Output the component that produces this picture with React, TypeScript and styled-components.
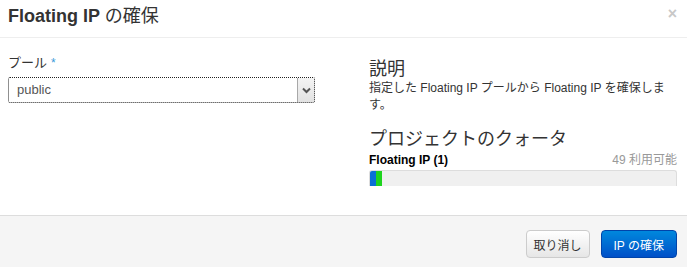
import styled, {createGlobalStyle} from "styled-components";

const GlobalStyle = createGlobalStyle`
  html, body {
    margin: 0;
    padding: 0;
    background: #ffffff;
  }
  body {
    font-family: "Liberation Sans", "Noto Sans CJK JP", sans-serif;
    color: #333333;
  }
`;

const Modal = styled.div`
  width: 687px;
  height: 267px;
  display: flex;
  flex-direction: column;
  background: #ffffff;
`;

const Header = styled.header`
  height: 37px;
  border-bottom: 1px solid #eeeeee;
  display: flex;
  align-items: center;
  justify-content: space-between;
  padding: 0 10px 0 8px;
`;

const Title = styled.h3`
  margin: 0;
  font-size: 18px;
  font-weight: bold;
  color: #333333;
  line-height: 20px;
  padding-bottom: 6px;

  span {
    font-weight: normal;
  }
`;

const Close = styled.span`
  font-size: 16px;
  font-weight: bold;
  color: #c8c8c8;
  line-height: 16px;
  margin-top: -10px;
`;

const Body = styled.div`
  flex: 1;
  display: grid;
  grid-template-columns: 361px 308px;
  padding: 0 10px 0 8px;
`;

const LeftCol = styled.div`
  padding-top: 16px;
`;

const Label = styled.label`
  display: block;
  font-size: 13px;
  color: #333333;
  line-height: 18px;
  margin-bottom: 5px;

  em {
    font-style: normal;
    color: #3a9ad9;
    margin-left: 4px;
    font-size: 12px;
  }
`;

const Select = styled.div`
  width: 307px;
  height: 26px;
  box-sizing: border-box;
  border: 1px dotted #222222;
  border-radius: 2px;
  display: flex;
  align-items: stretch;
  background: #ffffff;
`;

const SelectValue = styled.span`
  flex: 1;
  font-size: 13px;
  color: #555555;
  padding-left: 8px;
  line-height: 24px;
`;

const SelectArrow = styled.span`
  width: 16px;
  border-left: 1px solid #a8a8a8;
  background: linear-gradient(#f4f4f4, #e2e2e2);
  display: flex;
  align-items: center;
  justify-content: center;
`;

const RightCol = styled.div`
  padding-top: 17px;
`;

const Heading = styled.h4`
  margin: 0;
  font-size: 18px;
  font-weight: normal;
  color: #333333;
  line-height: 24px;
  font-family: "Noto Sans CJK JP", sans-serif;
`;

const Text = styled.p`
  margin: 0 0 11px;
  font-size: 12px;
  line-height: 17px;
  color: #333333;
  padding-top: 1px;
`;

const QuotaRow = styled.div`
  display: flex;
  justify-content: space-between;
  font-size: 12px;
  line-height: 16px;
  margin-top: 3px;
`;

const QuotaName = styled.strong`
  color: #000000;
`;

const QuotaLeft = styled.span`
  color: #999999;
`;

const Bar = styled.div`
  height: 15px;
  margin-top: 2px;
  background: #f0f0f0;
  border: 1px solid #dddddd;
  border-bottom: none;
  border-radius: 3px 3px 0 0;
  overflow: hidden;
  display: flex;
`;

const Fill = styled.div<{$color: string}>`
  background: ${p => p.$color};
`;

const Footer = styled.footer`
  height: 51px;
  border-top: 1px solid #dddddd;
  background: #f5f5f5;
  display: flex;
  justify-content: flex-end;
  align-items: center;
  gap: 11px;
  padding: 0 10px 0 0;
`;

const Button = styled.button<{$primary?: boolean}>`
  height: 28px;
  box-sizing: border-box;
  padding: 0 ${p => (p.$primary ? "12px" : "7px")};
  font-size: 12px;
  font-family: "Liberation Sans", "Noto Sans CJK JP", sans-serif;
  border-radius: 4px;
  border: 1px solid ${p => (p.$primary ? "#0044aa" : "#cccccc")};
  color: ${p => (p.$primary ? "#ffffff" : "#333333")};
  background: ${p =>
    p.$primary
      ? "linear-gradient(#0088dd, #0050c8)"
      : "linear-gradient(#ffffff, #e6e6e6)"};
  margin-top: 5px;
`;

export default function App() {
  return (
    <>
      <GlobalStyle />
      <Modal>
        <Header>
          <Title>
            Floating IP <span>の確保</span>
          </Title>
          <Close>×</Close>
        </Header>
        <Body>
          <LeftCol>
            <Label>
              プール<em>*</em>
            </Label>
            <Select>
              <SelectValue>public</SelectValue>
              <SelectArrow>
                <svg width="9" height="7" viewBox="0 0 9 7">
                  <path d="M1 1.5 L4.5 5 L8 1.5" fill="none" stroke="#555" strokeWidth="2" />
                </svg>
              </SelectArrow>
            </Select>
          </LeftCol>
          <RightCol>
            <Heading>説明</Heading>
            <Text>指定した Floating IP プールから Floating IP を確保します。</Text>
            <Heading>プロジェクトのクォータ</Heading>
            <QuotaRow>
              <QuotaName>Floating IP (1)</QuotaName>
              <QuotaLeft>49 利用可能</QuotaLeft>
            </QuotaRow>
            <Bar>
              <Fill $color="#0a6fd6" style={{width: "6px"}} />
              <Fill $color="#1ed41e" style={{width: "6px"}} />
            </Bar>
          </RightCol>
        </Body>
        <Footer>
          <Button>取り消し</Button>
          <Button $primary>IP の確保</Button>
        </Footer>
      </Modal>
    </>
  );
}
